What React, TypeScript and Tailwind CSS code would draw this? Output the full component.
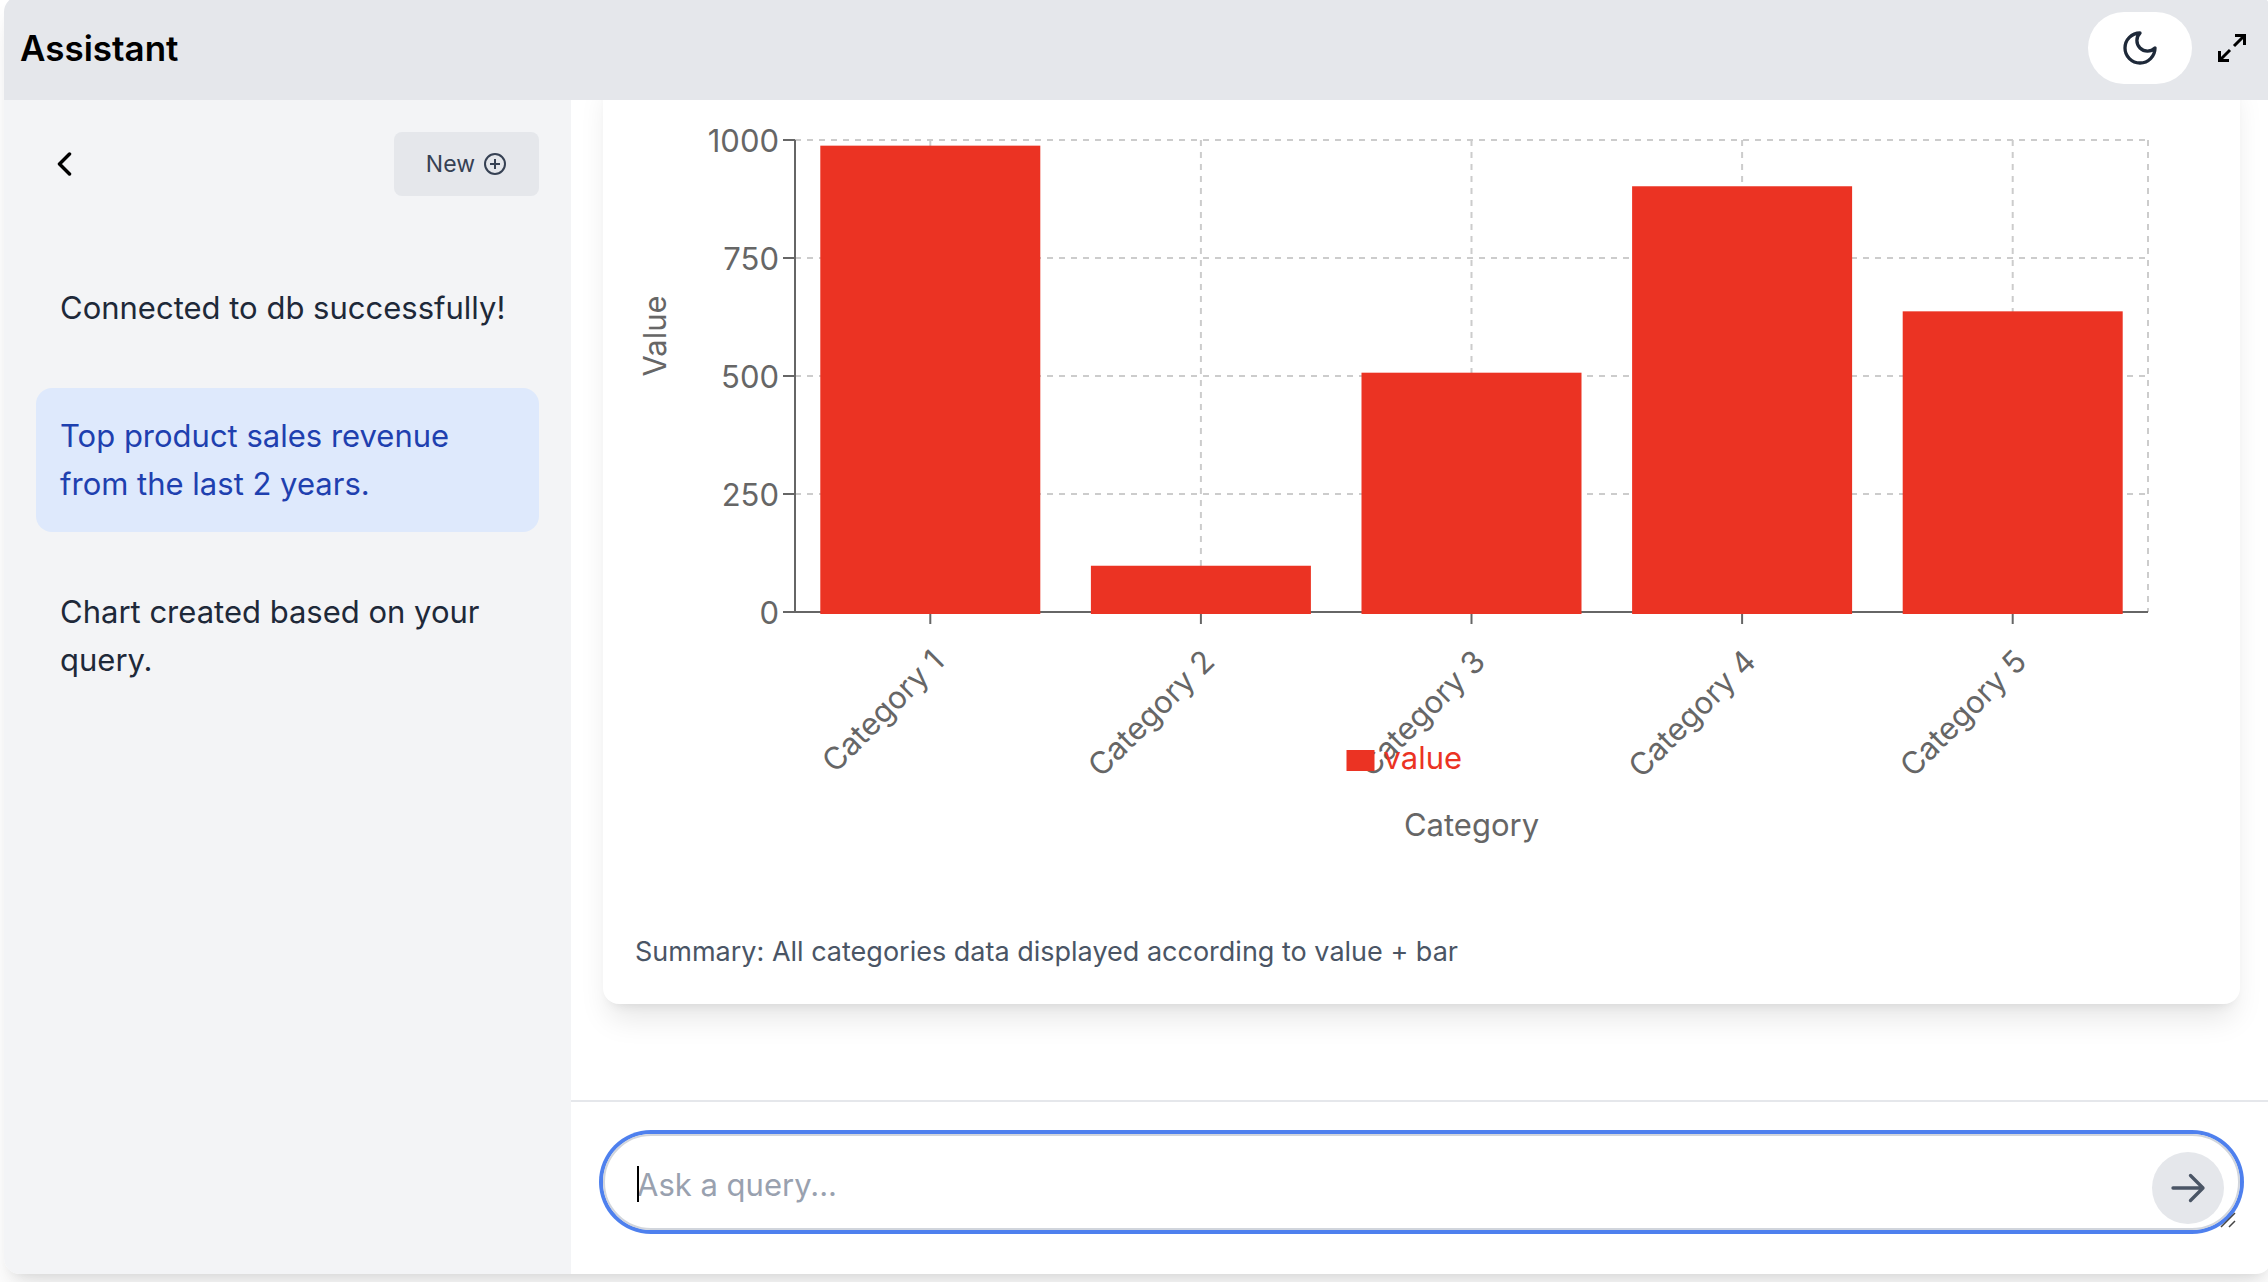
import { useEffect, useRef, useState } from "react";

const history = [
  { text: "Connected to db successfully!", active: false },
  { text: "Top product sales revenue from the last 2 years.", active: true },
  { text: "Chart created based on your query.", active: false },
];

const data = [
  { name: "Category 1", value: 988 },
  { name: "Category 2", value: 98 },
  { name: "Category 3", value: 507 },
  { name: "Category 4", value: 902 },
  { name: "Category 5", value: 637 },
];

const PLOT = { left: 160, right: 60, top: 40, height: 472 };

function BarChart() {
  const ref = useRef<HTMLDivElement>(null);
  const [width, setWidth] = useState(1573);

  useEffect(() => {
    const el = ref.current;
    if (!el) return;
    const measure = () => setWidth(el.clientWidth);
    measure();
    const observer = new ResizeObserver(measure);
    observer.observe(el);
    return () => observer.disconnect();
  }, []);

  const x0 = PLOT.left;
  const x1 = width - PLOT.right;
  const y0 = PLOT.top;
  const y1 = PLOT.top + PLOT.height;
  const band = (x1 - x0) / data.length;
  const mid = (x0 + x1) / 2;

  return (
    <div ref={ref} className="w-full">
      <svg
        width={width}
        height={800}
        className="block text-[31px]"
        role="img"
        aria-label="Bar chart of value by category"
      >
        <g stroke="#ccc" strokeWidth={2} strokeDasharray="6 6">
          {[0, 1, 2, 3].map((i) => (
            <line key={i} x1={x0} x2={x1} y1={y0 + i * 118} y2={y0 + i * 118} />
          ))}
          {data.map((d, i) => (
            <line key={d.name} x1={x0 + band * (i + 0.5)} x2={x0 + band * (i + 0.5)} y1={y0} y2={y1} />
          ))}
          <line x1={x1} x2={x1} y1={y0} y2={y1} />
        </g>
        <g stroke="#666" strokeWidth={2}>
          <line x1={x0} x2={x1} y1={y1} y2={y1} />
          <line x1={x0} x2={x0} y1={y0} y2={y1} />
          {[0, 1, 2, 3, 4].map((i) => (
            <line key={i} x1={x0 - 12} x2={x0} y1={y0 + i * 118} y2={y0 + i * 118} />
          ))}
          {data.map((d, i) => (
            <line key={d.name} x1={x0 + band * (i + 0.5)} x2={x0 + band * (i + 0.5)} y1={y1} y2={y1 + 12} />
          ))}
        </g>
        <g fill="#666" textAnchor="end">
          {[1000, 750, 500, 250, 0].map((v, i) => (
            <text key={v} x={x0 - 16} y={y0 + i * 118 + 12}>
              {v}
            </text>
          ))}
          {data.map((d, i) => {
            const x = x0 + band * (i + 0.5);
            const y = y1 + 16;
            return (
              <text key={d.name} x={x - 14} y={y + 36} transform={`rotate(-45 ${x} ${y})`}>
                {d.name}
              </text>
            );
          })}
        </g>
        <g fill="#666" textAnchor="middle">
          <text x={mid} y={y1 + 224}>
            Category
          </text>
          <text x={31} y={y0 + 196} transform={`rotate(-90 31 ${y0 + 196})`}>
            Value
          </text>
        </g>
        {data.map((d, i) => {
          const h = (d.value / 1000) * PLOT.height;
          return (
            <rect
              key={d.name}
              x={x0 + band * (i + 0.5) - 110}
              y={y1 - h}
              width={220}
              height={h + 2}
              fill="#eb3323"
            />
          );
        })}
        <g fill="#eb3323">
          <rect x={mid - 125} y={y1 + 138} width={28} height={21} />
          <text x={mid - 88} y={y1 + 157}>
            value
          </text>
        </g>
      </svg>
    </div>
  );
}

export default function App() {
  return (
    <div className="h-screen overflow-hidden bg-white font-[Inter,'Liberation_Sans',sans-serif]">
      <div className="-mt-1 -mr-1 mb-2 ml-1 flex h-[calc(100vh-4px)] flex-col overflow-hidden rounded-2xl bg-white shadow-[0_20px_30px_-6px_rgb(0_0_0/0.1),0_8px_12px_-8px_rgb(0_0_0/0.1)]">
        <header className="flex shrink-0 items-center justify-between bg-gray-200 py-4 pr-6 pl-4">
          <h1 className="text-[35px] leading-[52px] font-semibold text-black">Assistant</h1>
          <div className="flex items-center gap-6">
            <button
              aria-label="Toggle dark mode"
              className="flex h-[72px] w-[104px] items-center justify-center rounded-full bg-white text-gray-800"
            >
              <svg width="40" height="40" viewBox="0 0 24 24" fill="none" stroke="currentColor" strokeWidth="2" strokeLinecap="round" strokeLinejoin="round">
                <path d="M12 3a6 6 0 0 0 9 9 9 9 0 1 1-9-9Z" />
              </svg>
            </button>
            <button aria-label="Expand" className="flex size-8 items-center justify-center text-black">
              <svg width="28" height="28" viewBox="0 0 28 28" fill="none" stroke="currentColor" strokeWidth="3">
                <path d="M16 12 26 2M17 1.5h9.500V11M12 16 2 26M11 26.5H1.500V17" />
              </svg>
            </button>
          </div>
        </header>

        <div className="flex min-h-0 flex-1">
          <aside className="w-1/4 shrink-0 bg-gray-100 p-8">
            <div className="mb-16 flex items-center justify-between">
              <button aria-label="Back" className="flex items-center p-4 text-black">
                <svg width="24" height="24" viewBox="0 0 24 24" fill="none" stroke="currentColor" strokeWidth="3.5" strokeLinecap="round" strokeLinejoin="round">
                  <path d="M17.500 2 7.500 12l10 10" />
                </svg>
              </button>
              <button className="flex h-16 items-center gap-2 rounded-lg bg-gray-200 px-8 text-[23px] text-gray-700">
                New
                <svg width="24" height="24" viewBox="0 0 24 24" fill="none" stroke="currentColor" strokeWidth="2">
                  <circle cx="12" cy="12" r="10" />
                  <path d="M12 7v10M7 12h10" />
                </svg>
              </button>
            </div>
            <ul className="flex flex-col gap-8">
              {history.map((item) => (
                <li key={item.text}>
                  <button
                    className={
                      item.active
                        ? "block w-full rounded-2xl bg-[#dee9fc] p-6 text-left text-[31px] leading-[48px] text-[#1e40af]"
                        : "block w-full rounded-2xl p-6 text-left text-[31px] leading-[48px] text-gray-800"
                    }
                  >
                    {item.text}
                  </button>
                </li>
              ))}
            </ul>
          </aside>

          <main className="flex min-w-0 flex-1 flex-col">
            <div className="flex min-h-0 flex-1 flex-col justify-end overflow-hidden px-8 pb-24">
              <section className="rounded-2xl bg-white p-8 shadow-[0_20px_30px_-6px_rgb(0_0_0/0.1),0_8px_12px_-8px_rgb(0_0_0/0.1)]">
                <BarChart />
                <p className="mt-8 text-[27px] leading-10 text-gray-600">
                  Summary: All categories data displayed according to value + bar
                </p>
              </section>
            </div>
            <form className="shrink-0 border-t-2 border-gray-200 px-8 py-8" onSubmit={(e) => e.preventDefault()}>
              <div className="relative h-[108px]">
                <textarea
                  aria-label="Ask a query"
                  rows={1}
                  placeholder="Ask a query..."
                  className="block h-24 w-full resize-none overflow-hidden rounded-full border-2 border-gray-300 px-8 py-6 text-[31px] leading-[50px] caret-transparent ring-4 ring-[#4e80ee] outline-none placeholder:text-gray-400"
                />
                <span className="absolute top-8 left-[34px] h-9 w-0.5 bg-black" />
                <button
                  aria-label="Send"
                  className="absolute top-[18px] right-4 flex size-[72px] items-center justify-center rounded-full bg-gray-200 text-gray-600"
                >
                  <svg width="40" height="40" viewBox="0 0 24 24" fill="none" stroke="currentColor" strokeWidth="2" strokeLinecap="round" strokeLinejoin="round">
                    <path d="M13.500 4.500 21 12l-7.500 7.500M21 12H3" />
                  </svg>
                </button>
                <svg className="absolute right-1 bottom-3.5" width="16" height="16" viewBox="0 0 16 16" stroke="#444" strokeWidth="1.5">
                  <path d="M1 15 15 1M9 15l6-6" />
                </svg>
              </div>
            </form>
          </main>
        </div>
      </div>
    </div>
  );
}
